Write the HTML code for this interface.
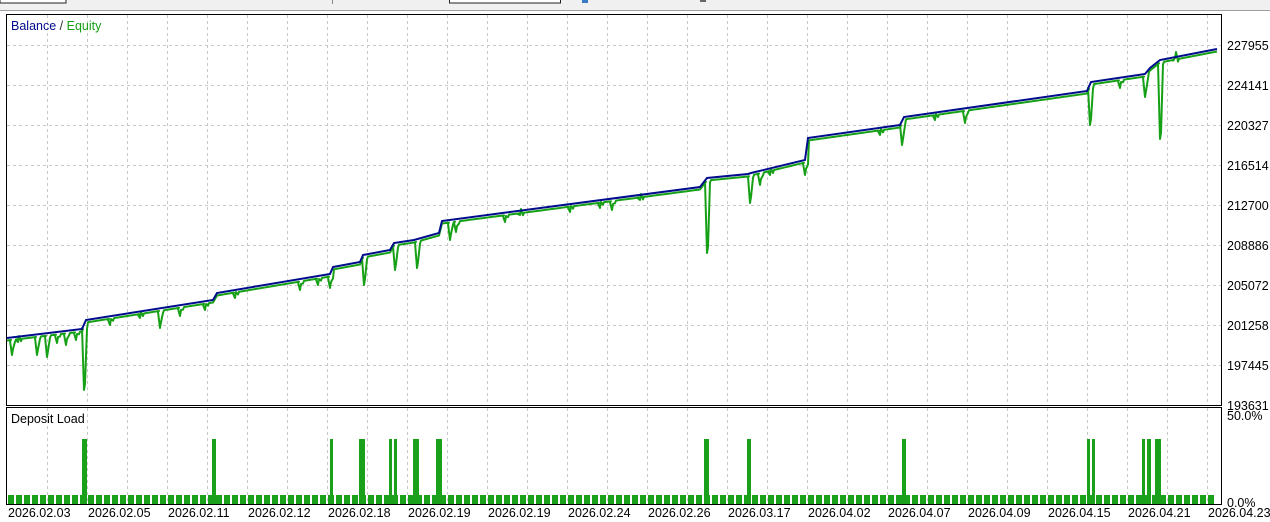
<!DOCTYPE html>
<html><head><meta charset="utf-8"><style>
html,body{margin:0;padding:0;width:1270px;height:522px;overflow:hidden;background:#fff;font-family:"Liberation Sans","DejaVu Sans",sans-serif}
</style></head><body>
<svg id="s" width="1270" height="522" xmlns="http://www.w3.org/2000/svg" font-family="Liberation Sans, DejaVu Sans, sans-serif">
<rect x="0" y="0" width="1270" height="10" fill="#f0f0f0"/>
<line x1="0" y1="10.5" x2="1270" y2="10.5" stroke="#a0a0a0"/>
<rect x="0" y="-2" width="66" height="5" fill="#fff" stroke="#222"/>
<rect x="449.5" y="-2" width="111" height="5" fill="#fff" stroke="#222"/>
<line x1="332.5" y1="0" x2="332.5" y2="4" stroke="#888"/>
<rect x="582" y="0" width="6" height="3" fill="#3a7bc8"/>
<rect x="700" y="0" width="6" height="2" fill="#666"/>
<g id="grid" stroke="#c8c8c8" stroke-dasharray="3,3"></g>
<rect x="6.5" y="14.5" width="1215" height="391" fill="none" stroke="#000"/>
<rect x="6.5" y="407.5" width="1215" height="97" fill="none" stroke="#000"/>
<g id="bars" fill="#1aa01a"></g>
<polyline id="eq" fill="none" stroke="#16a016" stroke-width="2" stroke-linejoin="round"/>
<polyline id="bal" fill="none" stroke="#000c8c" stroke-width="2"/>
<text x="11" y="30" font-size="12.5"><tspan fill="#000c8c">Balance</tspan><tspan fill="#333"> / </tspan><tspan fill="#16a016">Equity</tspan></text>
<text x="11" y="423" font-size="12.5" fill="#000">Deposit Load</text>
<g id="lab" font-size="12.5" fill="#000"></g>
</svg>
<script>
var ns="http://www.w3.org/2000/svg";
function el(p,t,a,txt){var e=document.createElementNS(ns,t);for(var k in a)e.setAttribute(k,a[k]);if(txt)e.textContent=txt;document.getElementById(p).appendChild(e);}
for(var x=47;x<1221;x+=40){el("grid","line",{x1:x+.5,y1:15,x2:x+.5,y2:405});el("grid","line",{x1:x+.5,y1:408,x2:x+.5,y2:504});}
for(var y=45;y<405;y+=40){el("grid","line",{x1:7,y1:y+.5,x2:1221,y2:y+.5});}
var vals=["227955","224141","220327","216514","212700","208886","205072","201258","197445","193631"];
for(var i=0;i<10;i++)el("lab","text",{x:1227,y:50+i*40},vals[i]);
el("lab","text",{x:1227,y:420},"50.0%");el("lab","text",{x:1227,y:507},"0.0%");
var d=["2026.02.03","2026.02.05","2026.02.11","2026.02.12","2026.02.18","2026.02.19","2026.02.19","2026.02.24","2026.02.26","2026.03.17","2026.04.02","2026.04.07","2026.04.09","2026.04.15","2026.04.21","2026.04.23"];
for(var i=0;i<16;i++)el("lab","text",{x:8+80*i,y:517},d[i]);
var B=[[7,338],[82,329],[86,320],[213,300],[217,293],[330,274],[333,267],[360,262],[363,255],[390,250],[394,243],[414,240],[439,233],[442,221],[700,187],[707,178],[748,174],[751,173],[805,160],[808,138],[900,125],[904,117],[1087,91],[1091,82],[1145,74],[1150,68],[1155,64],[1160,60],[1217,49]];
function bal(x){for(var i=0;i<B.length-1;i++){if(x>=B[i][0]&&x<=B[i+1][0]){var t=(x-B[i][0])/(B[i+1][0]-B[i][0]||1);return B[i][1]+t*(B[i+1][1]-B[i][1]);}}return B[B.length-1][1];}
document.getElementById("bal").setAttribute("points",B.map(function(p){return p.join(",")}).join(" "));
var D={12:355,18:342,37:355,47:357,57:343,66:345,76:340,84:390,110:325,140:318,160:328,180:316,205:310,235:298,300:290,318:285,330:288,364:285,395:270,417:268,450:240,456:232,505:222,520:215,570:212,600:208,612:210,640:200,707:253,750:203,760:185,770:175,805:175,880:135,902:145,935:120,965:123,1090:125,1120:88,1145:97,1160:139,1175:58};
var pts=[];
for(var x=7;x<=1217;x++){var b=bal(x)+2.5;var dp=D[x];if(dp){pts.push((x-2)+","+(b+1));pts.push(x+","+dp);pts.push((x+1)+","+(dp-6));pts.push((x+3)+","+(b+2));x+=3;}else pts.push(x+","+b);}
document.getElementById("eq").setAttribute("points",pts.join(" "));
for(var x=8;x<1216;x+=8){el("bars","rect",{x:x,y:495,width:6,height:9});}
var T=[[82,5],[212,4],[330,3],[359,6],[389,3],[394,3],[413,6],[436,6],[704,5],[747,4],[902,4],[1087,3],[1092,3],[1142,3],[1147,4],[1155,6]];
T.forEach(function(t){el("bars","rect",{x:t[0],y:439,width:t[1],height:65});});
</script>
</body></html>
